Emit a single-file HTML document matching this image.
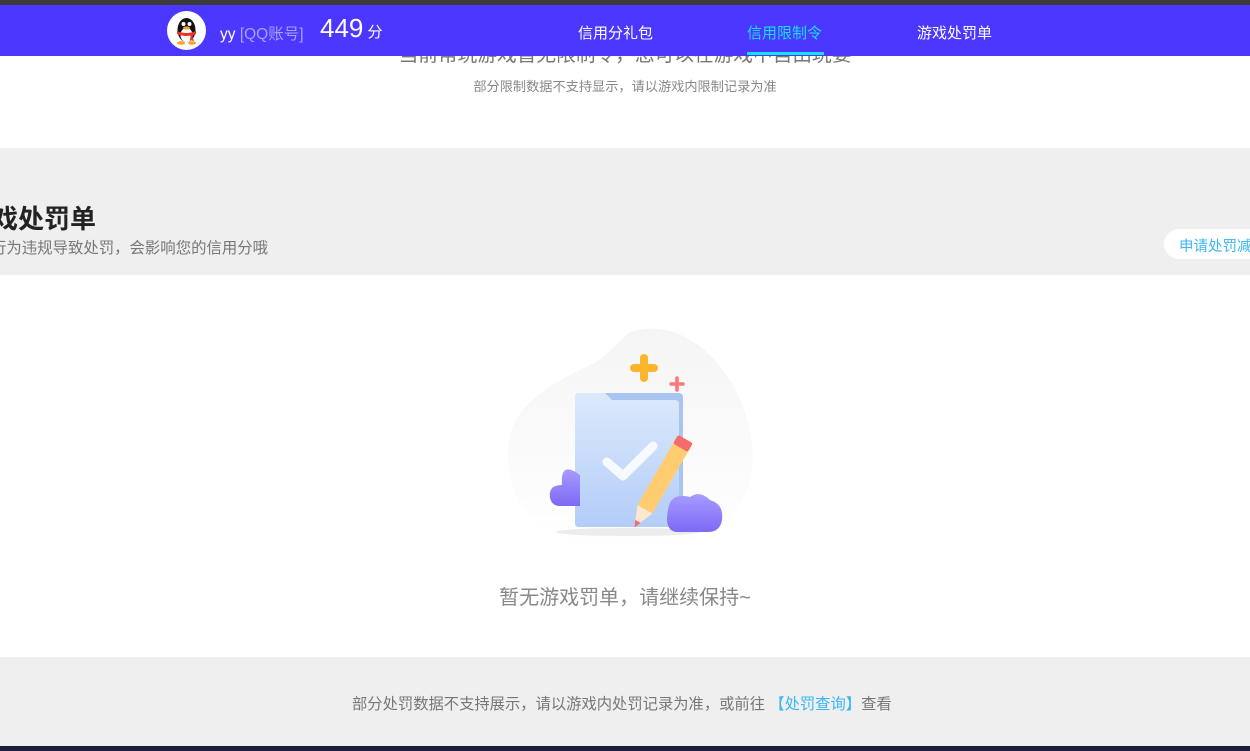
<!DOCTYPE html>
<html><head><meta charset="utf-8"><style>
*{margin:0;padding:0;box-sizing:border-box}
body{width:1250px;height:751px;overflow:hidden;position:relative;background:#fff;font-family:"Liberation Sans","Noto Sans CJK SC",sans-serif}
.a{position:absolute;white-space:nowrap}
</style></head><body>
<div class="a" style="left:0;top:38px;width:1250px;text-align:center;font-size:19.7px;color:#777">当前常玩游戏暂无限制令，您可以在游戏中自由玩耍</div>
<div class="a" style="left:0;top:76px;width:1250px;text-align:center;font-size:13.2px;color:#888">部分限制数据不支持显示，请以游戏内限制记录为准</div>
<div class="a" style="left:0;top:0;width:1250px;height:5px;background:#3a3a3a"></div>
<div class="a" style="left:0;top:5px;width:1250px;height:51px;background:#4b37ff"></div>
<div class="a" style="left:167px;top:11px;width:39px;height:39px;border-radius:50%;background:#fff;overflow:hidden">
<svg width="39" height="39" viewBox="0 0 39 39"><ellipse cx="19.5" cy="19" rx="9" ry="12" fill="#111"/><ellipse cx="19.5" cy="24" rx="6" ry="7" fill="#fff"/><circle cx="16.5" cy="13" r="2" fill="#fff"/><circle cx="22.5" cy="13" r="2" fill="#fff"/><ellipse cx="19.5" cy="17" rx="3.5" ry="1.6" fill="#f5a623"/><path d="M10 20 Q19.5 24 29 20 L29 23 Q19.5 27 10 23Z" fill="#e32"/><path d="M24 22 L27 30 L23 29Z" fill="#e32"/><ellipse cx="14" cy="32" rx="4" ry="1.8" fill="#f5a623"/><ellipse cx="25" cy="32" rx="4" ry="1.8" fill="#f5a623"/></svg></div>
<div class="a" style="left:220px;top:22px;font-size:15.5px;color:#fff">yy <span style="color:#a9a0ff">[QQ账号]</span></div>
<div class="a" style="left:320px;top:13px;font-size:26px;color:#fff">449<span style="font-size:15px"> 分</span></div>
<div class="a" style="left:578px;top:22px;font-size:15px;color:#fff">信用分礼包</div>
<div class="a" style="left:747px;top:22px;font-size:15px;color:#19e0f0">信用限制令</div>
<div class="a" style="left:747px;top:52px;width:77px;height:3px;background:#19e0f0"></div>
<div class="a" style="left:917px;top:22px;font-size:15px;color:#fff">游戏处罚单</div>

<div class="a" style="left:0;top:148px;width:1250px;height:127px;background:#efefef"></div>
<div class="a" style="left:-34px;top:199px;font-size:26px;font-weight:bold;color:#222">游戏处罚单</div>
<div class="a" style="left:-9px;top:236px;font-size:15.4px;color:#777">行为违规导致处罚，会影响您的信用分哦</div>
<div class="a" style="left:1164px;top:229px;width:120px;height:30px;border-radius:15px;background:#fff;padding:6px 0 0 15px;font-size:14.5px;color:#3ab6f5">申请处罚减免</div>

<svg class="a" style="left:500px;top:320px" width="270" height="240" viewBox="0 0 270 240">
<defs><linearGradient id="b" x1="0" y1="0" x2="0" y2="1"><stop offset="0" stop-color="#f5f5f5"/><stop offset="1" stop-color="#fff"/></linearGradient>
<linearGradient id="f" x1="0" y1="0" x2="0" y2="1"><stop offset="0" stop-color="#dde9fc"/><stop offset="1" stop-color="#b2cdf8"/></linearGradient>
<linearGradient id="c" x1="0" y1="0" x2="0" y2="1"><stop offset="0" stop-color="#a89bff"/><stop offset="1" stop-color="#7c6af5"/></linearGradient></defs>
<path d="M130 12 C200 -10 260 80 252 150 C245 210 180 235 120 232 C50 228 5 190 8 130 C10 80 60 60 100 40Z" fill="url(#b)"/>
<ellipse cx="128" cy="212" rx="72" ry="4" fill="#ececec"/>
<rect x="75" y="73" width="108" height="134" rx="4" fill="#a8c4f0"/>
<path d="M75 77 Q75 73 79 73 L105 73 L112 80 L175 80 Q179 80 179 84 L179 203 Q179 207 175 207 L79 207 Q75 207 75 203Z" fill="url(#f)"/>
<path d="M107 142 L123 156 L153 126" stroke="#fff" stroke-opacity=".85" stroke-width="9" fill="none" stroke-linecap="round" stroke-linejoin="round"/>
<path d="M80 155 Q60 140 62 165 Q48 165 50 178 Q52 186 60 186 L80 186Z" fill="url(#c)"/>
<g transform="translate(182 124) rotate(30)"><rect x="-8" y="0" width="17" height="75" fill="#ffcd70"/><rect x="-8" y="-6" width="17" height="10" rx="2" fill="#f36b6b"/><path d="M-8 75 L9 75 L0.5 96Z" fill="#fce8cc"/><path d="M-2.5 89 L3.5 89 L0.5 96Z" fill="#f36b6b"/></g>
<path d="M168 190 Q170 172 190 177 Q200 170 210 180 Q224 184 222 200 Q220 212 208 212 L176 212 Q164 210 168 190Z" fill="url(#c)"/>
<path d="M144 38 L144 58 M134 48 L154 48" stroke="#fdb52e" stroke-width="8" stroke-linecap="round"/>
<path d="M177 58 L177 70 M171 64 L183 64" stroke="#f87878" stroke-width="3.5" stroke-linecap="round"/>
</svg>
<div class="a" style="left:0;top:581px;width:1250px;text-align:center;font-size:20px;color:#888">暂无游戏罚单，请继续保持~</div>

<div class="a" style="left:0;top:657px;width:1250px;height:89px;background:#efefef"></div>
<div class="a" style="left:352px;top:692px;font-size:15.3px;color:#777">部分处罚数据不支持展示，请以游戏内处罚记录为准，或前往 <span style="color:#3ab6f5">【处罚查询】</span>查看</div>
<div class="a" style="left:0;top:746px;width:1250px;height:5px;background:#1c1c3c"></div>
</body></html>
